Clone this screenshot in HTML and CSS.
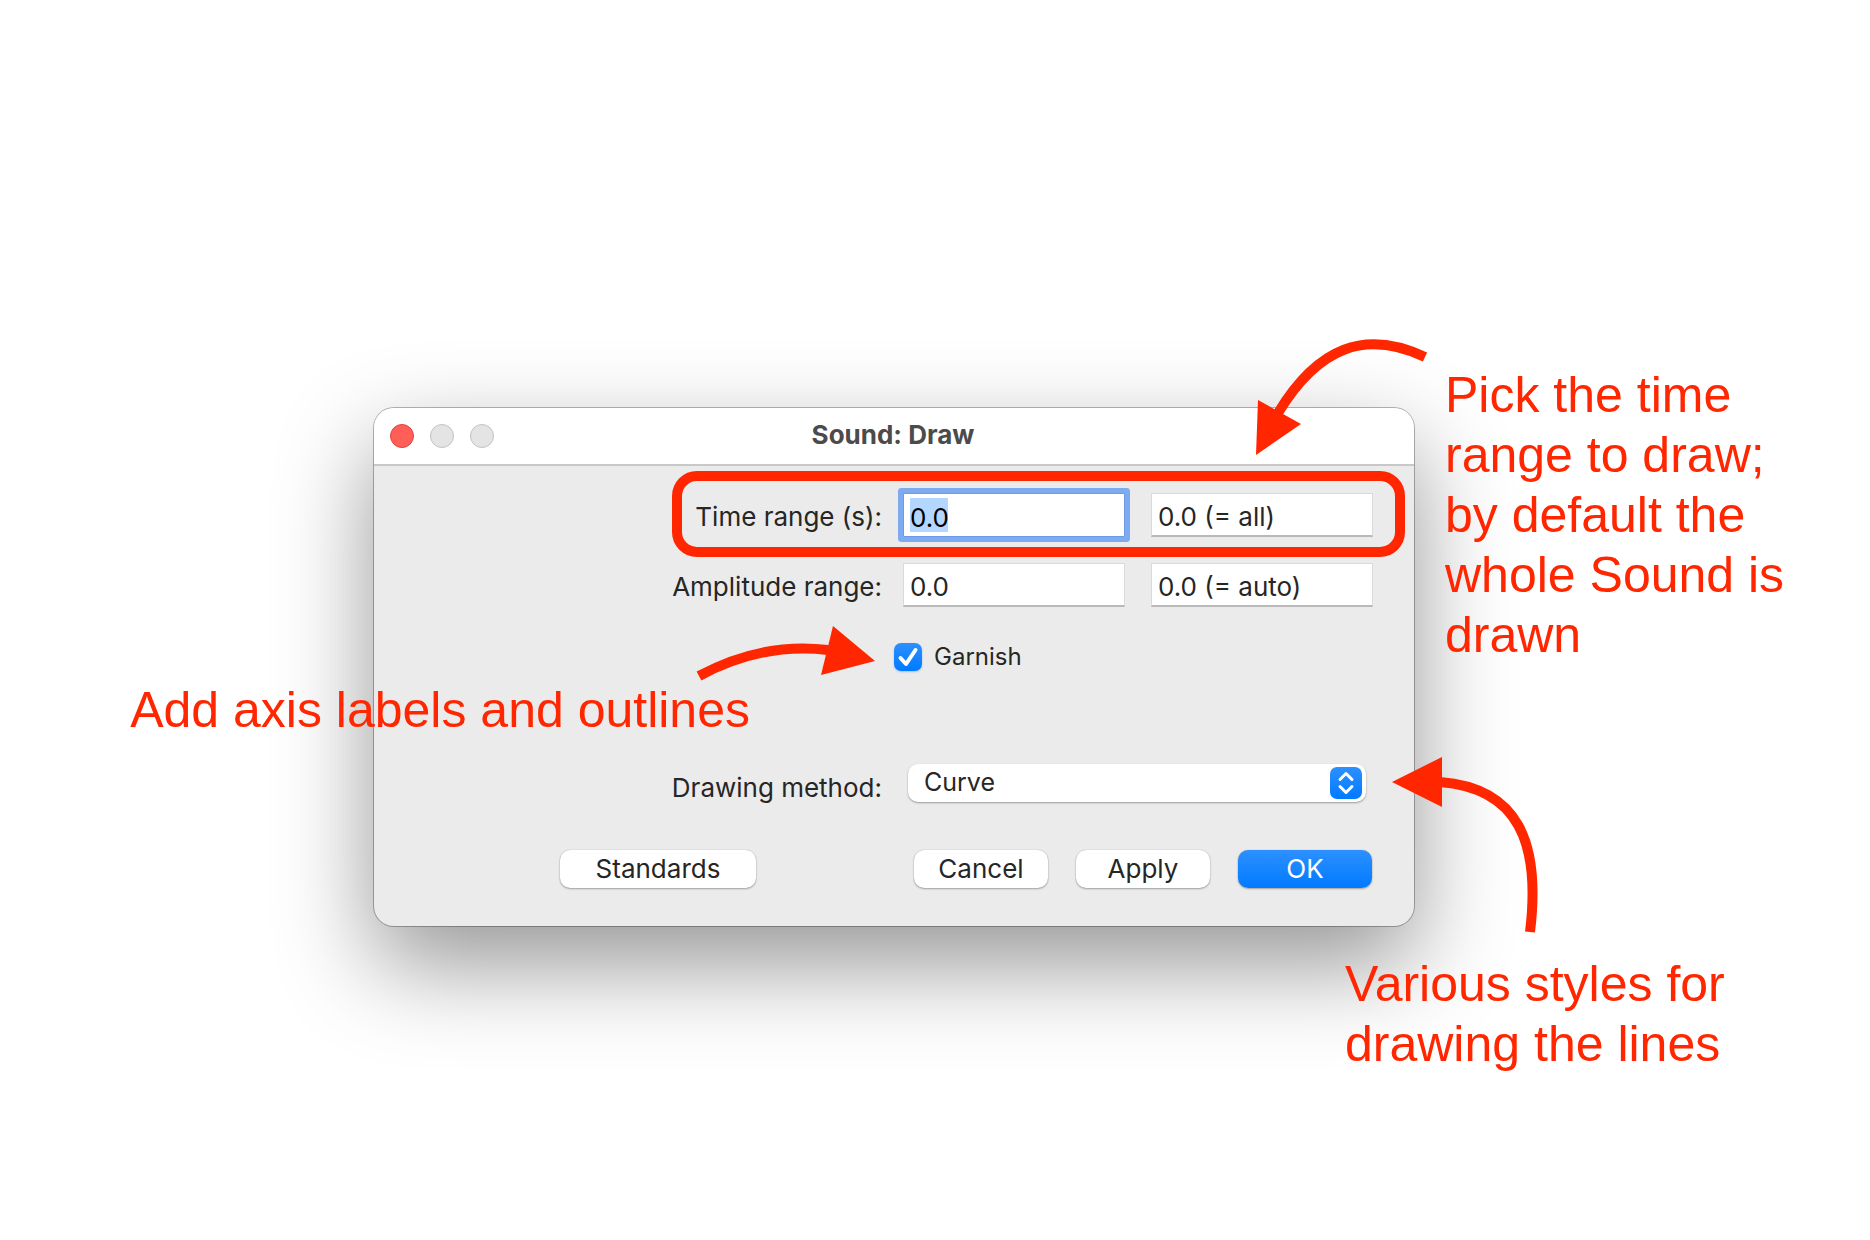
FILE: index.html
```html
<!DOCTYPE html>
<html lang="en">
<head>
<meta charset="utf-8">
<title>Sound: Draw</title>
<link rel="stylesheet" href="styles.css">
</head>
<body>
<main class="stage">
  <div class="figure">
    <section class="window" aria-labelledby="window-title">
      <header class="titlebar">
        <div class="lights">
          <button class="light light-close" type="button" aria-label="Close"></button>
          <button class="light" type="button" aria-label="Minimize" disabled></button>
          <button class="light" type="button" aria-label="Zoom" disabled></button>
        </div>
        <h1 class="title" id="window-title">Sound: Draw</h1>
      </header>
      <form class="form">
        <div class="row row-time">
          <label class="label" for="time-from">Time range (s):</label>
          <div class="fields">
            <input class="field field-focused" id="time-from" type="text" value="0.0">
            <input class="field" type="text" value="0.0 (= all)" aria-label="Time range end">
          </div>
        </div>
        <div class="row">
          <label class="label" for="amp-from">Amplitude range:</label>
          <div class="fields">
            <input class="field" id="amp-from" type="text" value="0.0">
            <input class="field" type="text" value="0.0 (= auto)" aria-label="Amplitude range end">
          </div>
        </div>
        <div class="row row-check">
          <label class="check">
            <span class="check-box">
              <input class="check-input" type="checkbox" checked>
              <svg class="check-mark" viewBox="0 0 28 28" aria-hidden="true"><path d="M6.500 15 L12 21 L21.500 7"/></svg>
            </span>
            Garnish
          </label>
        </div>
        <div class="row row-method">
          <label class="label" for="method">Drawing method:</label>
          <div class="popup">
            <select class="popup-select" id="method">
              <option>Curve</option>
              <option>Bars</option>
              <option>Poles</option>
              <option>Speckles</option>
            </select>
            <svg class="popup-knob" viewBox="0 0 32 32" aria-hidden="true">
              <defs><linearGradient id="knob" x2="0" y2="1"><stop stop-color="#2d90ff"/><stop offset="1" stop-color="#007aff"/></linearGradient></defs>
              <rect width="32" height="32" rx="7" fill="url(#knob)" stroke="none"/>
              <path d="M10 12.500 L16 6.500 L22 12.500 M10 19.500 L16 25.500 L22 19.500"/>
            </svg>
          </div>
        </div>
        <div class="actions">
          <button class="button button-wide" type="button">Standards</button>
          <div class="actions-main">
            <button class="button" type="button">Cancel</button>
            <button class="button" type="button">Apply</button>
            <button class="button button-primary" type="submit">OK</button>
          </div>
        </div>
      </form>
    </section>

    <div class="highlight"></div>

    <svg class="arrow arrow-time" viewBox="0 0 180 120" aria-hidden="true">
      <path d="M175 17 C115 -11 68 7 28 73"/>
      <polygon points="6,115 8,60 51,84"/>
    </svg>
    <p class="note note-time">Pick the time range to draw; by default the whole Sound is drawn</p>

    <svg class="arrow arrow-garnish" viewBox="0 0 190 60" aria-hidden="true">
      <path d="M9 56 Q72 22 138 30"/>
      <polygon points="185,41 143,6 131,55"/>
    </svg>
    <p class="note note-garnish">Add axis labels and outlines</p>

    <svg class="arrow arrow-method" viewBox="0 0 160 190" aria-hidden="true">
      <path d="M50 32 C128 38 151 92 140 182"/>
      <polygon points="2,32 52,7 52,57"/>
    </svg>
    <p class="note note-method">Various styles for drawing the lines</p>
  </div>
</main>
</body>
</html>
```
FILE: styles.css
```css
* { box-sizing: border-box; }

body {
  margin: 0;
  background: #fff;
  color: #262626;
  font-family: Inter, "Liberation Sans", sans-serif;
  font-size: 26px;
}

button, input, select { font: inherit; color: inherit; }

.stage {
  min-height: 100vh;
  padding: 408px 456px 0 374px;
}

.figure { position: relative; }

/* Dialog window */
.window {
  min-width: 880px;
  border-radius: 20px;
  background: #ebebeb;
  box-shadow: 0 0 0 1px rgba(0, 0, 0, .28), 0 38px 96px rgba(0, 0, 0, .42);
}

.titlebar {
  display: grid;
  grid-template-columns: 1fr auto 1fr;
  align-items: center;
  height: 58px;
  padding: 0 18px 0 16px;
  border-bottom: 2px solid #c8c8c8;
  border-radius: 20px 20px 0 0;
  background: #fff;
}

.lights { display: flex; gap: 16px; }

.light {
  width: 24px;
  height: 24px;
  padding: 0;
  border: 1px solid #c2c2c2;
  border-radius: 50%;
  background: #e4e4e4;
}

.light-close { border-color: #e0443e; background: #ff5f57; }

.title {
  margin: 0;
  padding-bottom: 2px;
  color: #4b4b4b;
  font-size: 26px;
  font-weight: 700;
  line-height: 32px;
}

/* Form */
.form { padding: 27px 41px 38px 16px; }

.row {
  display: flex;
  align-items: flex-start;
  justify-content: flex-end;
  gap: 21px;
  margin-bottom: 22px;
}

.label { line-height: 48px; }

.fields { display: flex; gap: 26px; }

.field {
  width: 222px;
  height: 44px;
  padding: 4px 6px 0;
  border: 1px solid #dadada;
  border-bottom: 2px solid #b9b9b9;
  border-radius: 0;
  background: #fff;
  outline: none;
}

.field-focused {
  border: 1px solid #6a9be8;
  background: linear-gradient(#b3d7ff, #b3d7ff) 6px 4px / 38px 34px no-repeat #fff;
  color: #000;
  box-shadow: 0 0 0 5px #7eabf0;
  border-radius: 1px;
}

.row-check { margin: 32px 0 93px; }

.check {
  display: flex;
  align-items: center;
  gap: 12px;
  width: 479px;
  height: 28px;
  font-size: 24px;
  line-height: 32px;
}

.check-box { position: relative; width: 28px; height: 28px; }

.check-input {
  display: block;
  width: 28px;
  height: 28px;
  margin: 0;
  appearance: none;
  border-radius: 7px;
  background: linear-gradient(#2d90ff, #007aff);
  box-shadow: 0 1px 2px rgba(0, 90, 220, .3);
}

.check-mark {
  position: absolute;
  inset: 0;
  fill: none;
  stroke: #fff;
  stroke-width: 4;
  stroke-linecap: round;
  stroke-linejoin: round;
  pointer-events: none;
}

.row-method { gap: 26px; margin-bottom: 38px; }

.popup { position: relative; width: 458px; margin-right: 7px; }

.popup-select {
  display: block;
  width: 100%;
  height: 38px;
  padding: 0 48px 2px 16px;
  appearance: none;
  border: 0;
  border-radius: 10px;
  background: #fff;
  font-size: 25px;
  box-shadow: 0 1px 2px rgba(0, 0, 0, .35);
}

.popup-knob {
  position: absolute;
  top: 3px;
  right: 4px;
  width: 32px;
  height: 32px;
  fill: none;
  stroke: #fff;
  stroke-width: 3;
  stroke-linecap: round;
  stroke-linejoin: round;
  pointer-events: none;
}

.actions {
  display: flex;
  justify-content: flex-end;
  gap: 158px;
  padding-right: 1px;
}

.actions-main { display: flex; gap: 28px; }

.button {
  width: 134px;
  height: 38px;
  padding: 0 0 2px;
  border: 0;
  border-radius: 10px;
  background: #fff;
  box-shadow: 0 0 1px rgba(0, 0, 0, .3), 0 1px 2px rgba(0, 0, 0, .3);
}

.button-wide { width: 196px; }

.button-primary {
  background: linear-gradient(#2d90ff, #007aff);
  color: #fff;
}

/* Annotations over the dialog */
.highlight {
  position: absolute;
  top: 63px;
  right: 9px;
  width: 733px;
  height: 86px;
  border: 10px solid #ff2600;
  border-radius: 25px;
  pointer-events: none;
}

.note {
  position: absolute;
  margin: 0;
  color: #ff2600;
  font-family: "Liberation Sans", Arial, sans-serif;
  font-size: 50px;
  line-height: 60px;
}

.note-time { top: -43px; left: calc(100% + 31px); width: 360px; }
.note-garnish { top: 272px; right: 664px; white-space: nowrap; }
.note-method { top: 546px; left: calc(100% - 69px); width: 400px; }

.arrow {
  position: absolute;
  overflow: visible;
  pointer-events: none;
}

.arrow path { fill: none; stroke: #ff2600; stroke-width: 10; }
.arrow polygon { fill: #ff2600; }

.arrow-time { top: -68px; left: calc(100% - 164px); width: 180px; height: 120px; }
.arrow-garnish { top: 212px; right: 534px; width: 190px; height: 60px; }
.arrow-method { top: 342px; left: calc(100% - 24px); width: 160px; height: 190px; }
```
